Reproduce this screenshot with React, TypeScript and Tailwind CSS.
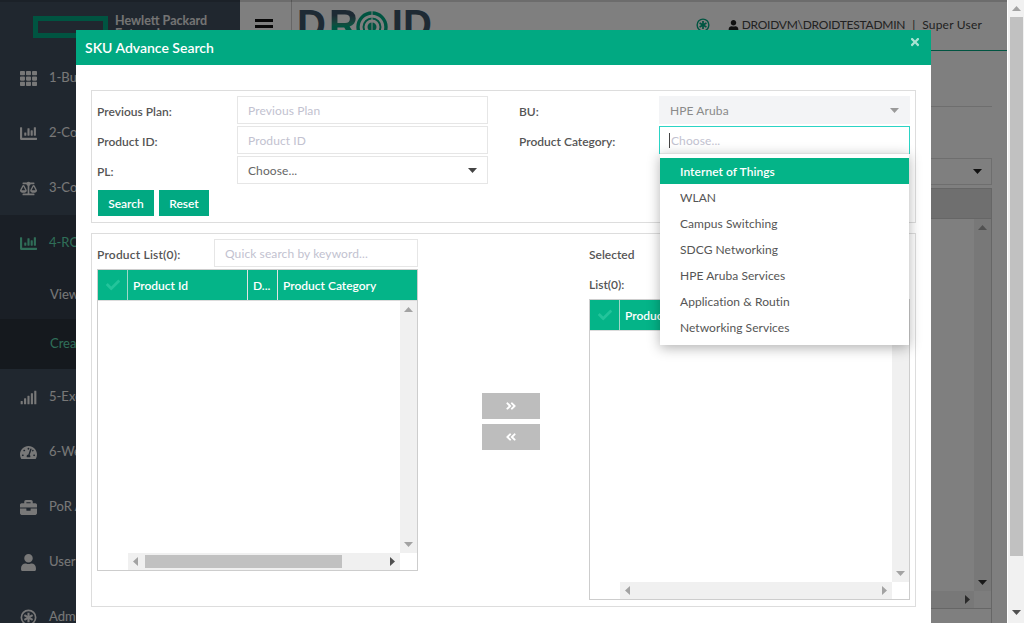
import React from "react";
import { FaTh, FaChartBar, FaBalanceScale, FaSignal, FaTachometerAlt, FaBriefcase, FaUser, FaCheck, FaTimes, FaAngleDoubleRight, FaAngleDoubleLeft } from "react-icons/fa";

const font = "font-['Lato','Liberation_Sans',sans-serif]";

function Tri({ dir, className }: { dir: "up" | "down" | "left" | "right"; className?: string }) {
  const pts = { up: "0,5 4.5,0 9,5", down: "0,0 9,0 4.5,5", left: "5,0 5,9 0,4.5", right: "0,0 0,9 5,4.5" }[dir];
  const horizontal = dir === "up" || dir === "down";
  return (
    <svg width={horizontal ? 9 : 5} height={horizontal ? 5 : 9} viewBox={horizontal ? "0 0 9 5" : "0 0 5 9"} className={className}>
      <polygon points={pts} fill="currentColor" />
    </svg>
  );
}

function Wheel({ size = 15, className }: { size?: number; className?: string }) {
  return (
    <svg width={size} height={size} viewBox="0 0 16 16" className={className}>
      <circle cx="8" cy="8" r="6.7" fill="none" stroke="currentColor" strokeWidth="1.6" />
      <g stroke="currentColor" strokeWidth="2">
        <line x1="8" y1="3.5" x2="8" y2="12.5" />
        <line x1="4.1" y1="5.7" x2="11.9" y2="10.3" />
        <line x1="11.9" y1="5.7" x2="4.1" y2="10.3" />
      </g>
    </svg>
  );
}

function SideItem({ icon, label, active }: { icon: React.ReactNode; label: string; active?: boolean }) {
  return (
    <div className={`flex h-[55px] shrink-0 items-center pl-[20px] pt-[2px] text-[13px] ${active ? "bg-[#343e4c] text-[#5fdcb0]" : "text-[#f0f0f0]"}`}>
      <span className="flex w-[29px] text-[17px]">{icon}</span>
      <span className="mb-[2px] whitespace-nowrap">{label}</span>
    </div>
  );
}

function Sidebar() {
  return (
    <aside className="flex h-full w-[240px] shrink-0 flex-col overflow-hidden bg-[#404e5e]">
      <div className="flex h-[50px] shrink-0 items-start pl-[33px] pt-[16px]">
        <div className="h-[22px] w-[75px] border-[5px] border-[#01a982]" />
        <div className="ml-[7px] mt-[-2px] text-[12.5px] font-bold leading-[13px] text-[#e8e8e8]">
          Hewlett Packard
          <br />
          Enterprise
        </div>
      </div>
      <SideItem icon={<FaTh />} label="1-Business Plan" />
      <SideItem icon={<FaChartBar />} label="2-Compare" />
      <SideItem icon={<FaBalanceScale />} label="3-Compare" />
      <div className="shrink-0 bg-[#343e4c]">
        <SideItem icon={<FaChartBar />} label="4-ROI" active />
        <div className="flex h-[49px] items-center pl-[50px] text-[13px] text-[#f0f0f0]">View</div>
        <div className="flex h-[50px] items-center bg-[#2a323d] pl-[50px] text-[13px] text-[#5fdcb0]">Create</div>
      </div>
      <SideItem icon={<FaSignal />} label="5-Execute" />
      <SideItem icon={<FaTachometerAlt />} label="6-Week" />
      <SideItem icon={<FaBriefcase />} label="PoR Admin" />
      <SideItem icon={<FaUser />} label="User" />
      <SideItem icon={<Wheel size={17} />} label="Admin" />
    </aside>
  );
}

function Logo() {
  return (
    <div className="ml-[5px] flex h-[50px] items-start pt-[2px] text-[40px] font-bold leading-[44px] font-['Liberation_Sans',sans-serif]">
      <span className="text-[#3c5568]">D</span>
      <span className="ml-[3px] bg-linear-to-b from-[#3c5568] from-30% to-[#01a982] to-55% bg-clip-text text-transparent">R</span>
      <svg width="32" height="32" viewBox="0 0 32 32" className="ml-[-2px] mt-[9px] text-[#01a982]">
        <circle cx="16" cy="16" r="14" fill="none" stroke="currentColor" strokeWidth="3.4" />
        <circle cx="16" cy="16" r="8.5" fill="none" stroke="currentColor" strokeWidth="2" />
        <circle cx="16" cy="16" r="4.5" fill="currentColor" />
        <line x1="16" y1="0" x2="16" y2="32" stroke="#fff" strokeWidth="1" />
      </svg>
      <span className="ml-[4px] text-[#3c5568]">ID</span>
    </div>
  );
}

function Page() {
  return (
    <div className={`relative flex h-full min-w-0 flex-1 bg-white ${font}`}>
      <Sidebar />
      <main className="flex h-full min-w-0 flex-1 flex-col overflow-hidden pr-[15px]">
        <header className="-mr-[15px] flex h-[51px] shrink-0 items-center border-b border-[#01a982] pr-[25px]">
          <div className="flex h-full w-[52px] flex-col gap-[3px] border-r border-[#ccc] pl-[15px] pt-[19px]">
            <span className="block h-[3px] w-[18px] bg-[#111]" />
            <span className="block h-[3px] w-[18px] bg-[#111]" />
            <span className="block h-[3px] w-[18px] bg-[#111]" />
          </div>
          <Logo />
          <div className="ml-auto flex items-center text-[12px] text-[#444]">
            <Wheel size={14} className="mr-[18px] text-[#01a982]" />
            <FaUser className="mr-[3px] text-[11px] text-[#222]" />
            <span className="whitespace-nowrap tracking-[-0.25px]">DROIDVM\DROIDTESTADMIN</span>
            <span className="mx-[7px]">|</span>
            <span className="whitespace-nowrap tracking-[0.2px]">Super User</span>
          </div>
        </header>
        <div className="ml-[15px] mt-[55px] h-px shrink-0 bg-[#ddd]" />
        <div className="ml-[15px] mt-[51px] flex h-[27px] shrink-0 items-center justify-end border border-[#ddd] pr-[9px] text-[#222]">
          <Tri dir="down" />
        </div>
        <div className="ml-[15px] mt-[3px] flex flex-1 flex-col border-r border-[#ccc]">
          <div className="flex h-[421px] shrink-0 flex-col border border-r-0 border-[#ccc]">
            <div className="h-[30px] shrink-0 border-b border-[#ccc] bg-[#dfdfdf]" />
            <div className="flex flex-1">
              <div className="flex-1" />
              <div className="flex w-[17px] flex-col items-center justify-between bg-[#f0f0f0] py-[6px] text-[#a3a3a3]">
                <Tri dir="up" />
                <Tri dir="down" className="text-[#333]" />
              </div>
            </div>
            <div className="flex h-[17px] shrink-0">
              <div className="flex flex-1 items-center justify-end bg-[#f0f0f0] pr-[4px] text-[#555]">
                <Tri dir="right" />
              </div>
              <div className="w-[17px] bg-[#fafafa]" />
            </div>
          </div>
        </div>
      </main>
    </div>
  );
}

function PageScrollbar() {
  return (
    <div className="flex h-full w-[17px] shrink-0 flex-col items-center border-l border-[#fff] bg-[#f1f1f1] pt-[6px]">
      <Tri dir="up" className="text-[#a3a3a3]" />
      <div className="mt-[6px] h-[539px] w-[13px] bg-[#c1c1c1]" />
      <Tri dir="down" className="mt-[54px] text-[#505050]" />
    </div>
  );
}

function Scroll({ thumb }: { thumb?: boolean }) {
  return (
    <div className="flex h-[17px] min-w-0 flex-1 items-center bg-[#f0f0f0] px-[5px] text-[#a3a3a3]">
      <Tri dir="left" />
      <div className="flex h-[13px] flex-1 items-center pl-[7px] pr-[48px]">
        {thumb && <div className="h-[13px] w-full bg-[#c1c1c1]" />}
      </div>
      <Tri dir="right" className={thumb ? "text-[#505050]" : "text-[#a3a3a3]"} />
    </div>
  );
}

function DataTable({ thumb, className }: { thumb?: boolean; className: string }) {
  const th = "flex h-full items-center whitespace-nowrap border-r border-[#e3e3e3] pl-[5px] pt-[2px] text-[12px] font-semibold text-white";
  return (
    <div className={`flex w-[321px] flex-col border border-[#cdcdcd] bg-white ${className}`}>
      <div className="flex h-[31px] shrink-0 border-b border-[#dcdcdc] bg-[#04b488]">
        <div className="flex h-full w-[30px] items-center justify-center border-r border-[#9fd8c8] text-[14px] text-[#23c49b]">
          <FaCheck />
        </div>
        <div className={`${th} w-[120px]`}>Product Id</div>
        <div className={`${th} w-[30px]`}>D...</div>
        <div className={`${th} flex-1 border-r-0`}>Product Category</div>
      </div>
      <div className="flex min-h-0 flex-1">
        <div className="flex-1" />
        <div className="flex w-[17px] flex-col items-center justify-between bg-[#f0f0f0] py-[6px] text-[#a3a3a3]">
          <Tri dir="up" />
          <Tri dir="down" />
        </div>
      </div>
      <div className="flex h-[17px] shrink-0">
        <div className="w-[30px]" />
        <Scroll thumb={thumb} />
        <div className="w-[17px]" />
      </div>
    </div>
  );
}

const labelCls = "shrink-0 text-[12px] font-semibold text-[#555]";
const inputCls = "flex h-[28px] items-center border pl-[10px] pt-[1px] text-[12px] tracking-[0.1px]";

function Field({ label, children }: { label: string; children: React.ReactNode }) {
  return (
    <div className="flex h-[28px] items-center">
      <span className={`${labelCls} mt-[3px] w-[140px]`}>{label}</span>
      {children}
    </div>
  );
}

const options = [
  "Internet of Things",
  "WLAN",
  "Campus Switching",
  "SDCG Networking",
  "HPE Aruba Services",
  "Application & Routin",
  "Networking Services",
];

function Modal() {
  return (
    <div className={`absolute left-[76px] top-[30px] bottom-0 flex w-[855px] flex-col overflow-hidden bg-white ${font}`}>
      <div className="relative flex h-[35px] shrink-0 items-center bg-[#01a982] pb-[1px] pl-[9px] text-[14px] font-semibold text-white">
        SKU Advance Search
        <FaTimes className="absolute right-[10px] top-[6px] text-[12px] text-[#a8e3d3]" />
      </div>
      <div className="flex flex-1 flex-col px-[15px] pt-[25px]">
        <section className="flex h-[133px] shrink-0 border border-[#dddddd] pl-[5px] pt-[5px]">
          <div className="flex flex-col gap-[2px]">
            <Field label="Previous Plan:">
              <div className={`${inputCls} w-[251px] border-[#e6e6e6] text-[#c2c2d0]`}>Previous Plan</div>
            </Field>
            <Field label="Product ID:">
              <div className={`${inputCls} w-[251px] border-[#e6e6e6] text-[#c2c2d0]`}>Product ID</div>
            </Field>
            <Field label="PL:">
              <div className={`${inputCls} w-[251px] justify-between border-[#e6e6e6] pr-[10px] text-[#666]`}>
                Choose...
                <Tri dir="down" className="text-[#444]" />
              </div>
            </Field>
            <div className="ml-[1px] mt-[4px] flex gap-[5px]">
              <button className="h-[26px] w-[56px] bg-[#01a982] pt-[1px] text-[12px] font-semibold text-white">Search</button>
              <button className="h-[26px] w-[50px] bg-[#01a982] pt-[1px] text-[12px] font-semibold text-white">Reset</button>
            </div>
          </div>
          <div className="ml-[31px] flex flex-col gap-[2px]">
            <Field label="BU:">
              <div className={`${inputCls} w-[251px] justify-between border-[#f3f4f6] bg-[#f3f4f6] pr-[10px] text-[#8a8a8a]`}>
                HPE Aruba
                <Tri dir="down" className="text-[#9a9a9a]" />
              </div>
            </Field>
            <Field label="Product Category:">
              <div className="relative">
                <div className={`${inputCls} h-[27px] w-[251px] border-[#2bd4c5] text-[#c2c2d0]`}>
                  <span className="-ml-[1px] mr-[1px] h-[15px] w-px bg-[#444]" />
                  Choose...
                </div>
                <div className="absolute left-[1px] top-[27px] z-10 w-[249px] border-t border-[#dddddd] bg-white pb-[5px] pt-[4px] shadow-[0_3px_12px_rgba(0,0,0,0.3)]">
                  {options.map((o, i) => (
                    <div
                      key={o}
                      className={`flex h-[26px] items-center pl-[20px] pt-[1px] text-[12px] tracking-[0.05px] ${i === 0 ? "bg-[#04b488] font-semibold text-white" : "text-[#555]"}`}
                    >
                      {o}
                    </div>
                  ))}
                </div>
              </div>
            </Field>
          </div>
        </section>
        <section className="mt-[10px] flex h-[374px] shrink-0 border border-[#dddddd] pl-[5px]">
          <div className="flex flex-col pt-[5px]">
            <div className="flex h-[28px] items-center">
              <span className={`${labelCls} mt-[4px] w-[117px] tracking-[0.2px]`}>Product List(0):</span>
              <div className={`${inputCls} w-[204px] border-[#e6e6e6] text-[#c2c2d0]`}>Quick search by keyword...</div>
            </div>
            <DataTable thumb className="mt-[2px] h-[302px]" />
          </div>
          <div className="ml-[64px] flex w-[58px] shrink-0 flex-col gap-[5px] pt-[159px]">
            <button className="flex h-[26px] items-center justify-center bg-[#bdbdbd] text-[12px] text-white">
              <FaAngleDoubleRight />
            </button>
            <button className="flex h-[26px] items-center justify-center bg-[#bdbdbd] text-[12px] text-white">
              <FaAngleDoubleLeft />
            </button>
          </div>
          <div className="ml-[49px] flex flex-col pt-[6px]">
            <div className={`${labelCls} -mb-[1px] leading-[30px]`}>
              Selected
              <br />
              List(0):
            </div>
            <DataTable className="h-[301px]" />
          </div>
        </section>
      </div>
    </div>
  );
}

export default function App() {
  return (
    <div className="relative flex h-[623px] w-[1024px] overflow-hidden bg-white">
      <div className="relative h-full min-w-0 flex-1">
        <Page />
        <div className="absolute inset-0 bg-black/50 shadow-[inset_0_2px_0_rgba(0,0,0,0.15)]" />
      </div>
      <PageScrollbar />
      <Modal />
    </div>
  );
}
